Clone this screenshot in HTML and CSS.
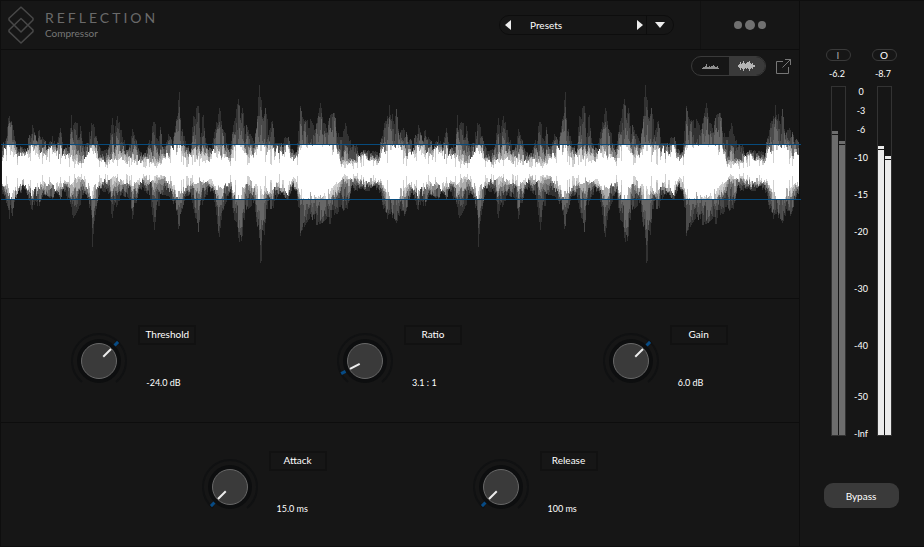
FILE: index.html
```html
<!DOCTYPE html>
<html lang="en">
<head>
<meta charset="utf-8">
<title>Reflection Compressor</title>
<link rel="stylesheet" href="styles.css">
</head>
<body>
<div class="plugin">
  <main class="main">
    <header class="header">
      <div class="brand">
        <svg class="logo" width="28" height="38" viewBox="0 0 28 38" fill="none" stroke="#484848" stroke-width="1.5" stroke-linejoin="round">
          <path d="M13 2 L14 1.2 L15 2 L26 12.2 V14 L14 26 L2 14 V12.2 Z"/>
          <path d="M14 12.5 L26 24 V25.6 L14 37 L2 25.6 V24 Z"/>
        </svg>
        <div>
          <h1 class="title">REFLECTION</h1>
          <p class="subtitle">Compressor</p>
        </div>
      </div>
      <div class="presets">
        <button class="step" type="button" aria-label="Previous preset"><svg width="6" height="10" viewBox="0 0 6 10"><path d="M6 0V10L0 5Z"/></svg></button>
        <button class="preset-name" type="button">Presets</button>
        <button class="step step-next" type="button" aria-label="Next preset"><svg width="6" height="10" viewBox="0 0 6 10"><path d="M0 0V10L6 5Z"/></svg></button>
        <button class="preset-menu" type="button" aria-label="Preset menu"><svg width="10" height="6" viewBox="0 0 10 6"><path d="M0 0H10L5 6Z"/></svg></button>
      </div>
      <button class="more" type="button" aria-label="More"><svg width="34" height="10" viewBox="0 0 34 10"><circle cx="5" cy="5" r="4"/><circle cx="17" cy="5" r="5"/><circle cx="29" cy="5" r="4"/></svg></button>
    </header>

    <section class="wave">
      <svg class="wave-plot" id="wave" viewBox="0 0 798 248" preserveAspectRatio="none" shape-rendering="crispEdges"></svg>
      <div class="tools">
        <div class="toggle">
          <button type="button" aria-label="Level view"><svg width="17" height="10" viewBox="0 0 17 10"><path d="M0 7H1V6H3V5H4V3H5V6H7V5H8V6H9V5H11V4H12V5H13V6H15V5H16V7H17V8H0Z"/></svg></button>
          <button class="on" type="button" aria-label="Waveform view"><svg width="17" height="10" viewBox="0 0 17 10"><path d="M0 4H1V3H2V1H3V3H4V2H5V0H6V2H7V3H8V2H9V1H11V0H12V2H13V3H14V2H15V4H17V6H15V8H14V7H13V8H12V10H11V8H10V7H9V8H8V7H7V8H6V10H5V8H4V7H3V9H2V7H1V6H0Z"/></svg></button>
        </div>
        <button class="popout" type="button" aria-label="Open in window"><svg width="15" height="15" viewBox="0 0 15 15" fill="none" stroke="#777"><path d="M7 2.5H.5V14.5H12.5V8M9 .5H14.5V6M14.5 .5L6.5 8.5"/></svg></button>
      </div>
    </section>

    <section class="knobs knobs-three">
      <div class="control" data-angle="45"><div class="dial"><input type="range" id="threshold" min="-60" max="0" value="-24"></div>
        <div class="info"><label for="threshold">Threshold</label><output for="threshold">-24.0 dB</output></div></div>
      <div class="control" data-angle="-118"><div class="dial"><input type="range" id="ratio" min="1" max="20" step="0.1" value="3.1"></div>
        <div class="info"><label for="ratio">Ratio</label><output for="ratio">3.1 : 1</output></div></div>
      <div class="control" data-angle="45"><div class="dial"><input type="range" id="gain" min="-24" max="24" value="6"></div>
        <div class="info"><label for="gain">Gain</label><output for="gain">6.0 dB</output></div></div>
    </section>

    <section class="knobs knobs-two">
      <div class="control" data-angle="-135"><div class="dial"><input type="range" id="attack" min="0" max="500" value="15"></div>
        <div class="info"><label for="attack">Attack</label><output for="attack">15.0 ms</output></div></div>
      <div class="control" data-angle="-135"><div class="dial"><input type="range" id="release" min="0" max="3000" value="100"></div>
        <div class="info"><label for="release">Release</label><output for="release">100 ms</output></div></div>
    </section>
  </main>

  <aside class="side">
    <div class="levels">
      <button class="channel channel-in" type="button">I</button>
      <button class="channel channel-out" type="button">O</button>
      <span class="reading reading-in">-6.2</span>
      <span class="reading reading-out">-8.7</span>
      <div class="meter meter-in"><i style="height:87.4%"></i><i style="height:84.5%"></i></div>
      <ol class="scale"><li>0</li><li>-3</li><li>-6</li><li>-10</li><li>-15</li><li>-20</li><li>-30</li><li>-40</li><li>-50</li><li>-Inf</li></ol>
      <div class="meter meter-out"><i style="height:83%"></i><i style="height:80.2%"></i></div>
    </div>
    <button class="bypass" type="button">Bypass</button>
  </aside>
</div>
<script src="app.js"></script>
</body>
</html>
```
FILE: styles.css
```css
* { box-sizing: border-box; }

body {
  margin: 0;
  background: #161616;
  color: #fff;
  font: 10px/12px Lato, "Liberation Sans", sans-serif;
}

button {
  margin: 0;
  padding: 0;
  border: 0;
  background: none;
  color: inherit;
  font: inherit;
}

svg { display: block; }
h1, p, ol { margin: 0; padding: 0; }

.plugin {
  display: grid;
  grid-template-columns: 1fr 124px;
  min-height: 100vh;
  border: 1px solid #0e0e0e;
  border-right: 0;
}

.main {
  display: grid;
  grid-template-rows: 49px 2fr 1fr 1fr;
  min-width: 0;
  border-right: 1px solid #0d0d0d;
}

.header {
  display: flex;
  align-items: stretch;
  border-bottom: 1px solid #0d0d0d;
}

.brand {
  display: flex;
  flex: 1;
  align-items: center;
  gap: 10px;
  padding-left: 6px;
}

.title {
  color: #6a6a6a;
  font-size: 14px;
  font-weight: 400;
  line-height: 18px;
  letter-spacing: 3px;
}

.subtitle {
  color: #777;
  line-height: 12px;
  padding-bottom: 2px;
}

.presets {
  display: flex;
  align-self: center;
  width: 175px;
  height: 20px;
  margin-right: 26px;
  border: 1px solid #0d0d0d;
  border-radius: 10px;
}

.presets svg { margin: auto; fill: #ededed; }
.step { width: 16px; }
.step-next { width: 12px; }
.preset-name { flex: 1; padding-left: 14px; text-align: left; }
.preset-menu { width: 27px; border-left: 1px solid #0d0d0d; }

.more {
  width: 99px;
  border-left: 1px solid #111;
}

.more svg { margin: auto; fill: #707070; }

.wave {
  display: grid;
  min-height: 0;
}

.wave-plot {
  grid-area: 1 / 1;
  width: 100%;
  height: 0;
  min-height: 100%;
  overflow: visible;
}

.tools {
  display: flex;
  grid-area: 1 / 1;
  align-items: center;
  place-self: start end;
  gap: 10px;
  padding: 6px 8px 0 0;
}

.toggle {
  display: flex;
  width: 75px;
  height: 20px;
  overflow: hidden;
  border: 1px solid #3a3a3a;
  border-radius: 10px;
}

.toggle button { flex: 1; }
.toggle .on { background: #3a3a3a; }
.toggle svg { margin: auto; fill: #8f8f8f; }
.toggle .on svg { fill: #b5b5b5; }

.knobs {
  align-items: center;
  padding-right: 1px;
  border-top: 1px solid #0d0d0d;
}

.knobs-three {
  display: grid;
  grid-template-columns: repeat(3, 1fr);
  justify-items: center;
}

.knobs-two {
  display: flex;
  justify-content: center;
  gap: 146px;
  padding-top: 4px;
}

.control {
  display: flex;
  align-items: center;
  gap: 11px;
}

.dial { position: relative; }

.dial input {
  position: absolute;
  inset: 0;
  width: 100%;
  height: 100%;
  margin: 0;
  opacity: 0;
}

.info {
  display: flex;
  flex-direction: column;
  gap: 32px;
  padding-bottom: 8px;
}

.info label {
  width: 58px;
  height: 20px;
  border: 2px solid #111;
  line-height: 15px;
  text-align: center;
}

.info output {
  padding-left: 8px;
  font-size: 9px;
}

.side {
  display: flex;
  flex-direction: column;
  align-items: center;
  justify-content: space-between;
  padding: 48px 2px 38px 0;
}

.levels {
  display: grid;
  grid-template-columns: 25px 21px 25px;
  grid-template-rows: 12px 13px 354px;
  row-gap: 6px;
  justify-items: center;
}

.channel {
  width: 25px;
  border: 1px solid #3a3a3a;
  border-radius: 6px;
  line-height: 10px;
}

.channel-in, .reading-in, .meter-in { grid-column: 1; }
.channel-out, .reading-out, .meter-out { grid-column: 3; }
.channel-in, .channel-out { grid-row: 1; }
.reading { grid-row: 2; padding-right: 2px; line-height: 14px; }
.reading, .scale { font-size: 9px; }
.channel-in { color: #aaa; }

.meter {
  display: flex;
  grid-row: 3;
  align-items: flex-end;
  gap: 1px;
  width: 15px;
  height: 350px;
  border: 1px solid #333;
}

.meter i {
  flex: 1;
  background: linear-gradient(transparent 3px, #161616 3px, #161616 4px, transparent 4px) var(--level);
}

.meter-in { --level: #6d6d6d; }
.meter-out { --level: #ebebeb; }

.scale {
  display: grid;
  grid-row: 3;
  grid-column: 2;
  grid-template-rows: 19fr 19fr 28fr 37fr 37fr 57fr 57fr 51fr 37fr 12px;
  list-style: none;
  text-align: center;
}

.bypass {
  width: 75px;
  height: 25px;
  border-radius: 9px;
  background: #3a3a3a;
}
```
FILE: app.js
```js
const NS = "http://www.w3.org/2000/svg";

// Peaks: x, height above centre, depth below centre
const outer = [
  [2,26,24],[5,34,28],[7,48,36],[9,58,49],[12,46,48],[15,30,24],[20,26,22],[25,22,20],[29,36,30],[32,46,42],[35,36,30],
  [39,41,40],[43,32,24],[48,27,26],[52,36,28],[56,24,22],[60,43,28],[64,22,22],[69,30,34],[71,56,40],[73,48,47],[76,49,42],
  [80,45,34],[84,24,22],[88,32,28],[91,54,55],[92,54,76],[94,44,50],[97,30,32],[101,20,20],[107,22,22],[110,38,30],[112,53,55],
  [114,38,40],[117,58,34],[121,44,26],[126,22,26],[130,32,28],[132,48,48],[135,34,36],[139,20,18],[145,18,20],[150,34,28],
  [154,56,59],[157,40,36],[160,44,34],[164,28,24],[168,37,25],[172,30,30],[175,53,40],[177,62,54],[179,79,61],[181,50,42],
  [185,30,26],[190,22,24],[194,66,42],[198,65,61],[200,50,42],[203,56,30],[206,28,24],[211,22,22],[215,44,36],[218,60,62],
  [219,69,66],[222,42,40],[225,38,36],[229,22,22],[233,46,42],[236,62,62],[238,72,71],[242,63,72],[245,48,40],[250,38,36],
  [254,28,30],[257,68,62],[259,88,78],[260,86,92],[262,66,88],[265,63,52],[268,46,38],[272,50,38],[275,28,34],[281,28,22],
  [287,38,30],[291,22,20],[296,20,20],[299,50,50],[300,66,92],[302,54,60],[306,50,52],[310,52,46],[313,46,50],[316,48,54],
  [320,68,53],[324,48,50],[328,50,46],[330,56,60],[334,58,44],[338,38,42],[342,36,40],[345,48,44],[348,40,38],[351,26,20],
  [355,28,20],[360,18,20],[366,22,20],[373,20,20],[378,20,18],[381,34,30],[384,48,42],[388,66,50],[391,67,56],[394,50,48],
  [396,62,52],[399,38,46],[403,48,50],[407,36,36],[412,30,26],[418,46,42]
];

// Solid core of the signal, same columns
const core = [
  [2,14,14],[8,26,26],[12,25,27],[18,15,15],[24,13,12],[32,25,22],[38,20,17],[44,16,14],[51,20,14],[60,23,18],[66,14,10],
  [70,16,15],[78,7,7],[84,12,10],[91,26,28],[96,18,15],[102,10,10],[110,10,8],[116,12,8],[124,15,12],[133,12,14],[140,10,10],
  [150,14,10],[156,4,5],[164,12,6],[169,18,14],[178,27,28],[184,16,18],[190,14,12],[198,12,12],[206,13,10],[212,16,14],
  [219,22,20],[225,14,14],[230,12,12],[236,27,28],[240,27,28],[246,20,12],[254,18,20],[259,27,28],[266,24,18],[272,20,20],
  [280,20,14],[287,23,18],[293,12,10],[297,16,14],[300,30,32],[306,32,28],[315,34,36],[325,34,35],[335,24,18],[341,6,8],
  [348,6,8],[355,10,6],[362,14,12],[370,11,12],[378,10,10],[384,22,18],[390,33,34],[397,30,30],[404,18,18],[412,16,14],[418,25,22]
];

const PERIOD = 386;
const MID = 121;

function at(table, x, column) {
  let i = 1;
  while (i < table.length - 1 && table[i][0] < x) i++;
  const a = table[i - 1], b = table[i];
  const t = Math.max(0, Math.min(1, (x - a[0]) / (b[0] - a[0])));
  return a[column] + (b[column] - a[column]) * t;
}

function random(n, seed) {
  const v = Math.sin(n * 127.1 + seed * 311.7) * 43758.5453;
  return v - Math.floor(v);
}

// Coarse streaks of a few columns with finer grain on top
function noise(x, seed) {
  return 0.7 * random(Math.floor(x / 2), seed) + 0.3 * random(x, seed + 40);
}

function add(parent, name, attributes) {
  const node = document.createElementNS(NS, name);
  for (const key in attributes) node.setAttribute(key, attributes[key]);
  parent.appendChild(node);
}

const wave = document.getElementById("wave");
const layers = [
  { mix: 1, opacity: 0.12, jitter: 0.6 },
  { mix: 0.7, opacity: 0.12, jitter: 0.9 },
  { mix: 0.45, opacity: 0.16, jitter: 1.1 },
  { mix: 0.35, opacity: 0.22, jitter: 1.2, inside: true },
  { mix: 0.2, opacity: 0.3, jitter: 1.2, inside: true },
  { mix: 0.1, opacity: 0.45, jitter: 1.1, inside: true },
  { mix: 0, opacity: 1, jitter: 0.8, inside: true }
];

layers.forEach((layer, index) => {
  let d = "";
  for (let px = 1; px < 798; px++) {
    const x = px + 1 < 412 ? px + 1 : px + 1 - PERIOD;
    const reach = (column, limit) => {
      const c = at(core, x, column), o = at(outer, x, column);
      const swing = 1 + layer.jitter * (0.4 - noise(x, index * 2 + column));
      const gap = layer.mix === 0 && c < 28 && random(x, 90) < 0.12 ? 0.4 : 1;
      const value = (c + (o - c) * layer.mix) * swing * gap;
      return Math.max(2, Math.round(Math.min(value, layer.inside ? limit : o)));
    };
    d += `M${px} ${MID - reach(1, 26)}h1V${MID + reach(2, 28)}h-1z`;
  }
  add(wave, "path", { d, fill: "#fff", "fill-opacity": layer.opacity });
});

[94, 149].forEach(y => add(wave, "rect", { x: 0, y, width: 800, height: 1, fill: "#074b7d" }));

document.querySelectorAll(".control").forEach(control => {
  const angle = control.dataset.angle;
  const svg = document.createElementNS(NS, "svg");
  for (const [k, v] of [["width", 56], ["height", 56], ["viewBox", "-28 -28 56 56"]]) svg.setAttribute(k, v);
  add(svg, "path", { d: "M-17 21A27 27 0 1 1 17 21", fill: "none", stroke: "#101112", "stroke-width": 2 });
  add(svg, "circle", { r: 22, fill: "#0d0e0f" });
  add(svg, "circle", { r: 17.5, fill: "#3a3a3a", stroke: "#686868" });
  add(svg, "path", { d: "M0 -6V-17", stroke: "#ededed", "stroke-width": 2, transform: `rotate(${angle})` });
  add(svg, "path", { d: "M0 -22V-27", stroke: "#074b85", "stroke-width": 3, transform: `rotate(${angle})` });
  control.querySelector(".dial").prepend(svg);
});
```
